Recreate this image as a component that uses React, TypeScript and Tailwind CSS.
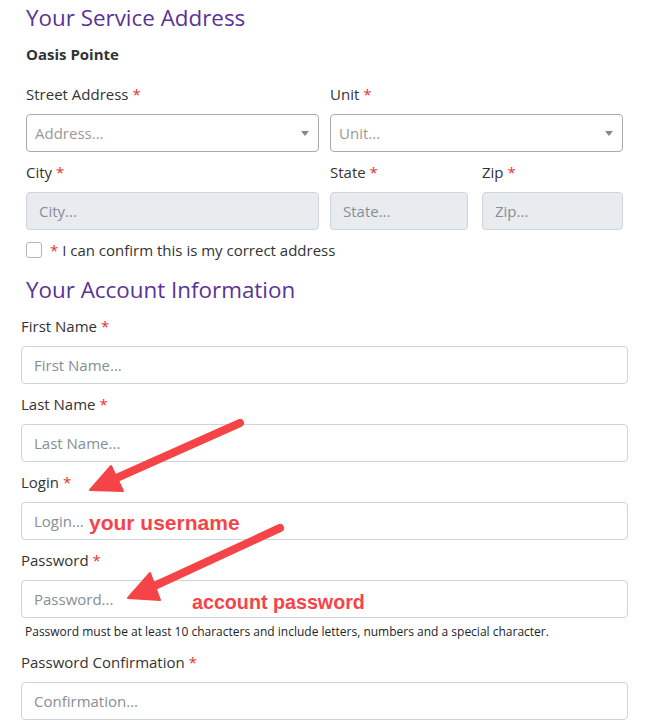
// Registration form – service address + account info, with red annotation arrows

const FONT = { fontFamily: '"Open Sans", "Noto Sans", sans-serif' };

function Req() {
  return <span className="text-[#e3342f]">*</span>;
}

function Label({ text }: { text: string }) {
  return (
    <div className="h-[22px] text-[15px] leading-[22px] text-[#333]">
      {text} <Req />
    </div>
  );
}

function TextInput({ placeholder, disabled }: { placeholder: string; disabled?: boolean }) {
  return (
    <div
      className={`mt-[9px] flex h-[38px] items-center rounded-[4px] border pt-[1px] px-3 text-[15px] text-[#868e96] ${
        disabled ? 'border-[#ced4da] bg-[#e9ecef]' : 'border-[#ced4da] bg-white'
      }`}
    >
      {placeholder}
    </div>
  );
}

function SelectInput({ placeholder }: { placeholder: string }) {
  return (
    <div className="mt-[9px] flex h-[38px] items-center justify-between rounded-[4px] border border-[#aaa] bg-white pl-2 pr-[9px] text-[15px] text-[#999]">
      <span>{placeholder}</span>
      <span className="h-0 w-0 border-x-[4px] border-t-[5px] border-x-transparent border-t-[#888]" />
    </div>
  );
}

function Field({
  label,
  placeholder,
  disabled,
  select,
  className = '',
}: {
  label: string;
  placeholder: string;
  disabled?: boolean;
  select?: boolean;
  className?: string;
}) {
  return (
    <div className={className}>
      <Label text={label} />
      {select ? (
        <SelectInput placeholder={placeholder} />
      ) : (
        <TextInput placeholder={placeholder} disabled={disabled} />
      )}
    </div>
  );
}

export default function App() {
  return (
    <div className="relative h-[720px] w-[652px] overflow-hidden bg-white" style={FONT}>
      {/* Service address */}
      <div className="px-[26px] pr-[29px]">
        <h2 className="mt-[2px] h-[32px] text-[22.4px] font-normal leading-[32px] text-[#5b3397]">
          Your Service Address
        </h2>
        <div className="mt-[9px] h-[22px] text-[15px] font-bold leading-[22px] text-[#333]">
          Oasis Pointe
        </div>
        <div className="mt-[18px] grid grid-cols-2 gap-x-[11px]">
          <Field label="Street Address" placeholder="Address..." select />
          <Field label="Unit" placeholder="Unit..." select />
        </div>
        <div className="mt-[9px] grid grid-cols-[293px_138px_1fr] gap-x-[11px]">
          <Field label="City" placeholder="City..." disabled />
          <Field label="State" placeholder="State..." disabled />
          <Field label="Zip" placeholder="Zip..." disabled className="ml-[3px]" />
        </div>
        <div className="mt-[11px] flex h-[18px] items-center gap-[8px] text-[15px] text-[#333]">
          <span className="h-[16px] w-[16px] rounded-[3px] border border-[#adb5bd] bg-white" />
          <span>
            <Req /> I can confirm this is my correct address
          </span>
        </div>
        <h2 className="mt-[15px] h-[32px] text-[22.4px] font-normal leading-[32px] text-[#5b3397]">
          Your Account Information
        </h2>
      </div>

      {/* Account info */}
      <div className="mt-[9px] flex flex-col gap-[9px] px-[21px] pr-[24px]">
        <Field label="First Name" placeholder="First Name..." />
        <Field label="Last Name" placeholder="Last Name..." />
        <Field label="Login" placeholder="Login..." />
        <div>
          <Field label="Password" placeholder="Password..." />
          <div className="mt-[6px] h-[16px] pl-[4px] text-[12px] leading-[16px] text-[#212529]">
            Password must be at least 10 characters and include letters, numbers and a special character.
          </div>
        </div>
        <Field label="Password Confirmation" placeholder="Confirmation..." className="mt-[2px]" />
      </div>

      {/* Annotations */}
      <svg className="pointer-events-none absolute left-0 top-0" width="652" height="720">
        <g fill="#f44448" stroke="#f44448">
          <line x1="240" y1="423" x2="112" y2="480" strokeWidth="8" strokeLinecap="round" />
          <polygon points="90,490 111,466 123,491" strokeWidth="2" strokeLinejoin="round" />
          <line x1="280" y1="528" x2="150" y2="588" strokeWidth="8" strokeLinecap="round" />
          <polygon points="128,598 150,573 160,600" strokeWidth="2" strokeLinejoin="round" />
        </g>
      </svg>
      <div
        className="absolute left-[89px] top-[509px] text-[21px] font-bold leading-[28px] text-[#f44448]"
        style={{ fontFamily: '"Liberation Sans", Arial, sans-serif' }}
      >
        your username
      </div>
      <div
        className="absolute left-[192px] top-[589px] text-[19.7px] font-bold leading-[26px] text-[#f44448]"
        style={{ fontFamily: '"Liberation Sans", Arial, sans-serif' }}
      >
        account password
      </div>
    </div>
  );
}
